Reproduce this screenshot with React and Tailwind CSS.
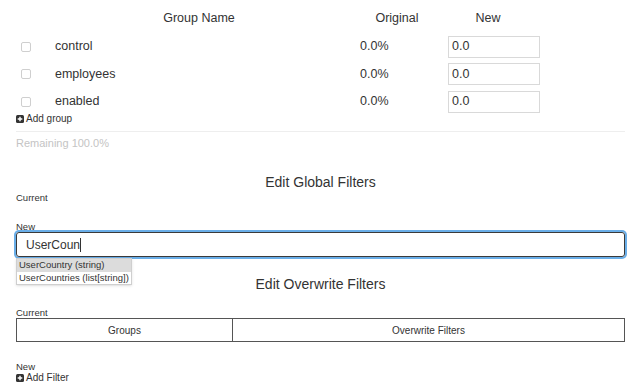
import React from 'react';

const font = { fontFamily: '"Liberation Sans", Arial, Helvetica, sans-serif' };

const PlusIcon = () => (
  <svg width="8" height="8" viewBox="0 0 8 8" className="shrink-0">
    <rect x="0" y="0" width="8" height="8" rx="1.5" fill="#333" />
    <path d="M4 1.7v4.6M1.7 4h4.6" stroke="#fff" strokeWidth="1.4" />
  </svg>
);

const groups = ['control', 'employees', 'enabled'];

export default function App() {
  return (
    <div style={font} className="w-[631px] h-[388px] overflow-hidden bg-white text-[#333] pl-[16px] pr-[6px]">
      {/* groups table */}
      <div className="grid grid-cols-[32px_302px_94px_88px] h-[32.5px] pt-[10px] text-[12.5px] leading-[16px]">
        <div />
        <div className="text-center">Group Name</div>
        <div className="text-center">Original</div>
        <div className="text-center">New</div>
      </div>
      {groups.map((g) => (
        <div key={g} className="grid grid-cols-[32px_302px_94px_auto] h-[27.5px] items-center text-[12.5px] pt-px">
          <div className="pl-[5px] flex items-center">
            <span className="w-[10px] h-[10px] rounded-[2px] border border-[#cfcfcf] bg-white" />
          </div>
          <div className="pl-[7px]">{g}</div>
          <div className="pl-[10px]">0.0%</div>
          <div className="pl-[4px]">
            <div className="w-[92px] h-[22px] border border-[#d9d9d9] flex items-center pl-[3px]">0.0</div>
          </div>
        </div>
      ))}
      <div className="flex items-center gap-[2px] text-[10px] leading-[10px] -mt-px">
        <PlusIcon />
        <span>Add group</span>
      </div>
      <div className="mt-[7px] border-t border-[#eeeeee]" />
      <div className="pt-[4px] text-[11px] leading-[14px] text-[#c4c4c4]">Remaining 100.0%</div>

      {/* global filters */}
      <div className="mt-[23px] text-center text-[14px] leading-[18px]">Edit Global Filters</div>
      <div className="mt-[2px] text-[9.5px] leading-[10px]">Current</div>
      <div className="mt-[19px] text-[9.5px] leading-[10px]">New</div>
      <div className="relative">
        <div className="h-[25px] rounded-[3px] border border-[#3a3a3a] shadow-[0_0_0_2px_#6aaee8] flex items-center pl-[9px] text-[12px]">
          <span>UserCoun</span>
          <span className="w-px h-[14px] bg-[#333]" />
        </div>
        <div className="absolute left-0 top-[26px] w-fit border border-[#cfcfcf] bg-white text-[9.5px] leading-[12.5px] whitespace-nowrap shadow-sm z-10">
          <div className="bg-[#dcdcdc] px-[2px]">UserCountry (string)</div>
          <div className="px-[2px]">UserCountries (list[string])</div>
        </div>
      </div>

      {/* overwrite filters */}
      <div className="mt-[18px] text-center text-[14px] leading-[18px]">Edit Overwrite Filters</div>
      <div className="mt-[15px] text-[9.5px] leading-[10px]">Current</div>
      <div className="grid grid-cols-[216px_1fr] h-[24px] border border-[#555] text-[10px]">
        <div className="flex items-center justify-center border-r border-[#555]">Groups</div>
        <div className="flex items-center justify-center">Overwrite Filters</div>
      </div>
      <div className="mt-[20px] text-[9.5px] leading-[10px]">New</div>
      <div className="flex items-center gap-[2px] text-[10px] leading-[12px]">
        <PlusIcon />
        <span>Add Filter</span>
      </div>
    </div>
  );
}
